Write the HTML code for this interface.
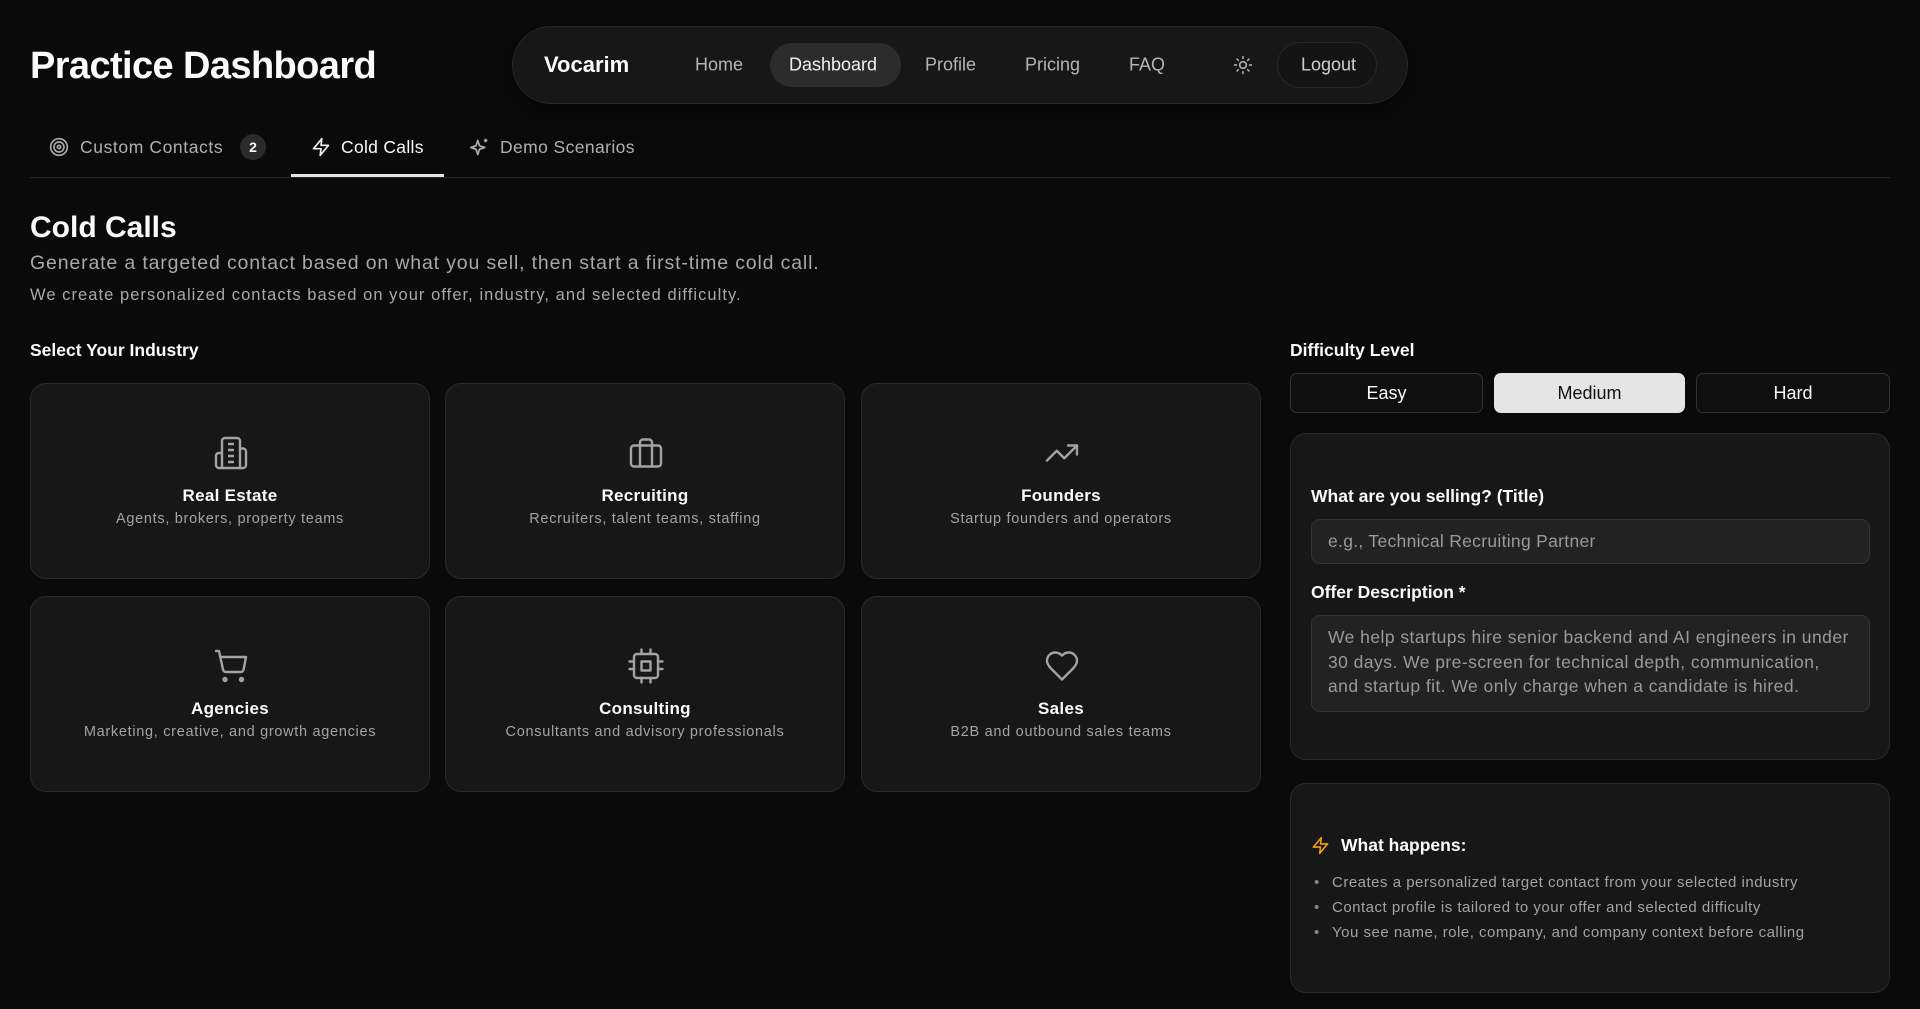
<!DOCTYPE html>
<html><head><meta charset="utf-8"><style>
*{box-sizing:border-box;margin:0;padding:0}
body{width:1920px;height:1009px;background:#0a0a0a;color:#fafafa;font-family:"Liberation Sans",sans-serif;position:relative;overflow:hidden}
.a{position:absolute}
.nav{left:512px;top:26px;width:896px;height:78px;border-radius:39px;background:#171717;border:1px solid #262626;box-shadow:0 8px 24px rgba(0,0,0,.5)}
.nl{position:absolute;top:50%;transform:translateY(-50%);font-size:18px;color:#b5b5b5}
.card{position:absolute;background:#171717;border:1px solid #2a2a2a;border-radius:16px;width:400px;height:196px;text-align:center}
.card svg{position:absolute;left:182px;top:51px}
.card .t{position:absolute;left:0;right:0;top:102px;font-size:17px;font-weight:bold;color:#fafafa;letter-spacing:0.3px}
.card .d{position:absolute;left:0;right:0;top:127px;font-size:14.5px;color:#a3a3a3;letter-spacing:0.7px}
.btn{position:absolute;top:373px;height:40px;border-radius:7px;border:1px solid #333;background:#0f0f0f;font-size:18px;text-align:center;line-height:38px;color:#fafafa}
.panel{position:absolute;left:1290px;width:600px;background:#171717;border:1px solid #2a2a2a;border-radius:16px}
.lbl{position:absolute;font-size:17.5px;font-weight:bold;color:#fafafa}
.inp{position:absolute;left:20px;width:559px;background:#222;border:1px solid #333;border-radius:9px;color:#9a9a9a;font-size:17.5px;padding:0 0 0 16px;letter-spacing:0.3px;white-space:nowrap}
ul{list-style:none}
li{position:absolute;left:20px;font-size:15px;color:#a3a3a3;letter-spacing:0.5px}
li:before{content:"•";position:absolute;left:-18px;color:#888}
</style></head><body>
<div class="a" style="left:30px;top:45px;font-size:38px;font-weight:bold;letter-spacing:-0.6px">Practice Dashboard</div>
<div class="a nav">
 <div class="nl" style="left:31px;font-size:22px;font-weight:bold;color:#fafafa">Vocarim</div>
 <div class="nl" style="left:182px">Home</div>
 <div class="a" style="left:257px;top:16px;width:131px;height:44px;border-radius:22px;background:#2c2c2c"></div>
 <div class="nl" style="left:276px;color:#f0f0f0">Dashboard</div>
 <div class="nl" style="left:412px">Profile</div>
 <div class="nl" style="left:512px">Pricing</div>
 <div class="nl" style="left:616px">FAQ</div>
 <svg class="a" style="left:720px;top:28px" width="20" height="20" viewBox="0 0 24 24" fill="none" stroke="#aaa" stroke-width="2" stroke-linecap="round"><circle cx="12" cy="12" r="4"/><path d="M12 2v2M12 20v2M4.9 4.9l1.4 1.4M17.7 17.7l1.4 1.4M2 12h2M20 12h2M4.9 19.1l1.4-1.4M17.7 6.3l1.4-1.4"/></svg>
 <div class="a" style="left:764px;top:15px;width:100px;height:46px;border-radius:23px;border:1px solid #262626;background:#141414"></div>
 <div class="nl" style="left:788px;color:#d0d0d0">Logout</div>
</div>
<svg class="a" style="left:49px;top:137px" width="20" height="20" viewBox="0 0 24 24" fill="none" stroke="#aaa" stroke-width="2"><circle cx="12" cy="12" r="10"/><circle cx="12" cy="12" r="6"/><circle cx="12" cy="12" r="2"/></svg>
<div class="a" style="left:80px;top:137px;font-size:17.5px;color:#b0b0b0;letter-spacing:0.6px">Custom Contacts</div>
<div class="a" style="left:240px;top:134px;width:26px;height:26px;border-radius:13px;background:#2a2a2a;font-size:14px;text-align:center;line-height:26px;font-weight:bold">2</div>
<svg class="a" style="left:311px;top:137px" width="20" height="20" viewBox="0 0 24 24" fill="none" stroke="#eee" stroke-width="2" stroke-linejoin="round"><path d="M13 2L3 14h9l-1 8 10-12h-9l1-8z"/></svg>
<div class="a" style="left:341px;top:137px;font-size:17.5px;color:#fafafa;letter-spacing:0.3px">Cold Calls</div>
<svg class="a" style="left:469px;top:137px" width="21" height="21" viewBox="0 0 24 24" fill="none" stroke="#aaa" stroke-width="2" stroke-linejoin="round"><path d="M10 4l2 6 6 2-6 2-2 6-2-6-6-2 6-2z"/><path d="M19 2v4M17 4h4"/></svg>
<div class="a" style="left:500px;top:137px;font-size:17.5px;color:#b0b0b0;letter-spacing:0.4px">Demo Scenarios</div>
<div class="a" style="left:30px;top:177px;width:1860px;height:1px;background:#262626"></div>
<div class="a" style="left:291px;top:174px;width:153px;height:3px;background:#e5e5e5"></div>
<div class="a" style="left:30px;top:211px;font-size:30px;font-weight:bold">Cold Calls</div>
<div class="a" style="left:30px;top:252px;font-size:19.5px;color:#a8a8a8;letter-spacing:0.85px">Generate a targeted contact based on what you sell, then start a first-time cold call.</div>
<div class="a" style="left:30px;top:286px;font-size:16.5px;color:#a8a8a8;letter-spacing:1.05px">We create personalized contacts based on your offer, industry, and selected difficulty.</div>
<div class="a" style="left:30px;top:340px;font-size:17.5px;font-weight:bold">Select Your Industry</div>

<div class="card" style="left:30px;top:383px"><svg width="36" height="36" viewBox="0 0 24 24" fill="none" stroke="#a3a3a3" stroke-width="1.6" stroke-linejoin="round"><path d="M6 22V4a2 2 0 012-2h8a2 2 0 012 2v18z"/><path d="M6 12H4a2 2 0 00-2 2v6a2 2 0 002 2h2M18 9h2a2 2 0 012 2v9a2 2 0 01-2 2h-2M10 6h4M10 10h4M10 14h4M10 18h4"/></svg><div class="t">Real Estate</div><div class="d">Agents, brokers, property teams</div></div>
<div class="card" style="left:445px;top:383px"><svg width="36" height="36" viewBox="0 0 24 24" fill="none" stroke="#a3a3a3" stroke-width="1.6" stroke-linejoin="round"><rect x="2" y="7" width="20" height="14" rx="2"/><path d="M16 21V5a2 2 0 00-2-2h-4a2 2 0 00-2 2v16"/></svg><div class="t">Recruiting</div><div class="d">Recruiters, talent teams, staffing</div></div>
<div class="card" style="left:861px;top:383px"><svg width="36" height="36" viewBox="0 0 24 24" fill="none" stroke="#a3a3a3" stroke-width="1.6" stroke-linecap="round" stroke-linejoin="round"><path d="M22 7l-8.5 8.5-5-5L2 17"/><path d="M16 7h6v6"/></svg><div class="t">Founders</div><div class="d">Startup founders and operators</div></div>
<div class="card" style="left:30px;top:596px"><svg width="36" height="36" viewBox="0 0 24 24" fill="none" stroke="#a3a3a3" stroke-width="1.6" stroke-linecap="round" stroke-linejoin="round"><circle cx="8" cy="21" r="1"/><circle cx="19" cy="21" r="1"/><path d="M2 2h2l2.7 12.4a2 2 0 002 1.6h9.7a2 2 0 002-1.6L22 6H5.1"/></svg><div class="t">Agencies</div><div class="d">Marketing, creative, and growth agencies</div></div>
<div class="card" style="left:445px;top:596px"><svg width="36" height="36" viewBox="0 0 24 24" fill="none" stroke="#a3a3a3" stroke-width="1.6" stroke-linecap="round" stroke-linejoin="round"><rect x="4" y="4" width="16" height="16" rx="2"/><rect x="9" y="9" width="6" height="6"/><path d="M9 1v3M15 1v3M9 20v3M15 20v3M20 9h3M20 14h3M1 9h3M1 14h3"/></svg><div class="t">Consulting</div><div class="d">Consultants and advisory professionals</div></div>
<div class="card" style="left:861px;top:596px"><svg width="36" height="36" viewBox="0 0 24 24" fill="none" stroke="#a3a3a3" stroke-width="1.6" stroke-linejoin="round"><path d="M19 14c1.5-1.5 3-3.2 3-5.5A5.5 5.5 0 0016.5 3c-1.8 0-3 .5-4.5 2-1.5-1.5-2.7-2-4.5-2A5.5 5.5 0 002 8.5c0 2.3 1.5 4 3 5.5l7 7z"/></svg><div class="t">Sales</div><div class="d">B2B and outbound sales teams</div></div>

<div class="a" style="left:1290px;top:340px;font-size:17.5px;font-weight:bold">Difficulty Level</div>
<div class="btn" style="left:1290px;width:193px">Easy</div>
<div class="btn" style="left:1494px;width:191px;background:#e5e5e5;border-color:#e5e5e5;color:#111">Medium</div>
<div class="btn" style="left:1696px;width:194px">Hard</div>

<div class="panel" style="top:433px;height:327px">
 <div class="lbl" style="left:20px;top:52px">What are you selling? (Title)</div>
 <div class="inp" style="top:85px;height:45px;line-height:43px">e.g., Technical Recruiting Partner</div>
 <div class="lbl" style="left:20px;top:148px">Offer Description *</div>
 <div class="inp" style="top:181px;height:97px;padding-top:9px;line-height:24.5px;letter-spacing:0.45px">We help startups hire senior backend and AI engineers in under<br>30 days. We pre-screen for technical depth, communication,<br>and startup fit. We only charge when a candidate is hired.</div>
</div>
<div class="panel" style="top:783px;height:210px">
 <svg class="a" style="left:20px;top:52px" width="19" height="19" viewBox="0 0 24 24" fill="none" stroke="#f59e0b" stroke-width="2" stroke-linejoin="round"><path d="M13 2L3 14h9l-1 8 10-12h-9l1-8z"/></svg>
 <div class="lbl" style="left:50px;top:51px">What happens:</div>
 <ul><li style="left:41px;top:90px">Creates a personalized target contact from your selected industry</li>
 <li style="left:41px;top:115px">Contact profile is tailored to your offer and selected difficulty</li>
 <li style="left:41px;top:140px">You see name, role, company, and company context before calling</li></ul>
</div>
</body></html>
